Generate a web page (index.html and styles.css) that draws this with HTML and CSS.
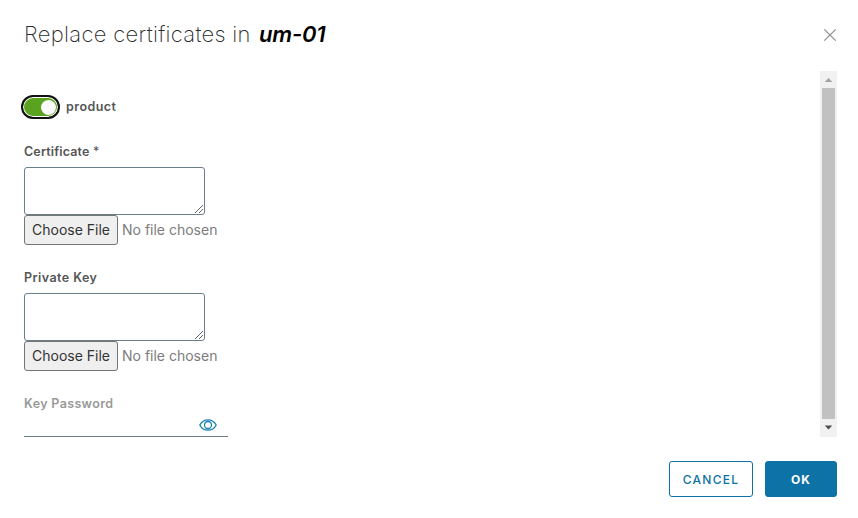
FILE: index.html
```html
<!DOCTYPE html>
<html lang="en">
<head>
<meta charset="utf-8">
<title>Replace certificates</title>
<link rel="stylesheet" href="styles.css">
</head>
<body>
<main class="dialog">
  <header class="header">
    <h1 class="title"><span class="action">Replace certificates in</span><em class="name">um-01</em></h1>
    <svg class="close" viewBox="0 0 14 14"><path d="M1.3 1.3l11.4 11.4M12.7 1.3L1.3 12.7"/></svg>
  </header>
  <div class="body">
    <form class="form">
      <div class="toggle-row"><span class="toggle"><span class="knob"></span></span><span class="label product">product</span></div>
      <section class="field">
        <div class="label cert">Certificate <span class="star">*</span></div>
        <div class="textarea"><svg class="grip" viewBox="0 0 10 10"><path d="M1 9L9 1M5 9l4-4"/></svg></div>
        <div class="file"><span class="choose"><span class="choose-text">Choose File</span></span><span class="none">No file chosen</span></div>
      </section>
      <section class="field">
        <div class="label private">Private Key</div>
        <div class="textarea"><svg class="grip" viewBox="0 0 10 10"><path d="M1 9L9 1M5 9l4-4"/></svg></div>
        <div class="file"><span class="choose"><span class="choose-text">Choose File</span></span><span class="none">No file chosen</span></div>
      </section>
      <section class="field">
        <div class="label password">Key Password</div>
        <div class="input"><svg class="eye" viewBox="0 0 18 12"><path d="M.8 6C2.500 2.800 5.400.8 9 .8S15.500 2.800 17.200 6C15.500 9.200 12.600 11.200 9 11.200S2.500 9.200.8 6z"/><circle cx="9" cy="6" r="3.500"/></svg></div>
      </section>
    </form>
    <div class="scrollbar">
      <svg class="arrow up" viewBox="0 0 17 17"><path d="M4.700 11L8.500 7l3.800 4z"/></svg>
      <div class="thumb"></div>
      <svg class="arrow down" viewBox="0 0 17 17"><path d="M4.700 6h7.600l-3.800 4z"/></svg>
    </div>
  </div>
  <footer class="footer"><div class="button cancel"><span>CANCEL</span></div><div class="button ok"><span>OK</span></div></footer>
</main>
</body>
</html>
```
FILE: styles.css
```css
* { box-sizing: border-box; }
body { margin: 0; background: #fff; font-family: Inter, "Liberation Sans", sans-serif; }
svg { display: block; fill: none; }
.dialog { height: 518px; padding: 0 21px 0 24px; display: flex; flex-direction: column; overflow: hidden; }
.header { height: 71px; display: flex; justify-content: space-between; align-items: flex-start; }
.title { margin: 19px 0 0; display: flex; gap: 8px; line-height: 30px; font-size: 22px; font-weight: 300; color: #2b2b2b; white-space: nowrap; }
.action { width: 227px; font-weight: 200; letter-spacing: .3px; }
.name { font-weight: 600; color: #000; letter-spacing: -.2px; }
.close { width: 14px; height: 14px; margin-top: 28px; stroke: #8c8c8c; stroke-width: 1.2; }
.body { height: 366px; display: flex; justify-content: space-between; }
.form { width: 204px; padding-top: 24px; }
.toggle-row { display: flex; align-items: center; gap: 6px; height: 24px; margin-left: -3px; }
.toggle { width: 39px; height: 24px; border: 2px solid #111; border-radius: 12px; background: #5aa220; box-shadow: inset 0 0 0 1px #fff; display: flex; align-items: center; justify-content: flex-end; padding-right: 2px; }
.knob { width: 15px; height: 15px; border-radius: 50%; background: #fafafa; }
.label { font-size: 12.5px; line-height: 18px; font-weight: 600; color: #555; white-space: nowrap; }
.product { letter-spacing: .45px; }
.cert { letter-spacing: .15px; }
.private { letter-spacing: .45px; }
.star { font-weight: 400; }
.field { height: 102px; margin-top: 24px; }
.textarea { width: 181px; height: 48px; margin-top: 6px; border: 1px solid #69808a; border-radius: 3px; display: flex; align-items: flex-end; justify-content: flex-end; }
.grip { width: 10px; height: 10px; stroke: #555; stroke-width: .9; }
.file { height: 30px; display: flex; align-items: center; gap: 4px; font-size: 14px; line-height: 20px; white-space: nowrap; }
.choose { width: 94px; height: 30px; padding: 4px 7px; border: 1px solid #757575; border-radius: 3px; background: #efefef; color: #333; }
.none { color: #7c7c7c; }
.password { color: #999; letter-spacing: .35px; }
.input { height: 24px; padding: 6px 11px 0 0; border-bottom: 1px solid #687d86; display: flex; justify-content: flex-end; }
.eye { width: 18px; height: 12px; stroke: #187fae; stroke-width: 1.3; }
.scrollbar { width: 17px; height: 366px; background: #f1f1f1; display: flex; flex-direction: column; align-items: center; }
.arrow { width: 17px; height: 17px; flex: none; }
.up { fill: #a3a3a3; }
.down { height: 18px; fill: #505050; }
.thumb { width: 13px; flex: 1; background: #c1c1c1; }
.footer { display: flex; justify-content: flex-end; gap: 12px; margin-top: 24px; }
.button { height: 36px; border: 1px solid #0d72a5; border-radius: 3px; display: flex; align-items: center; justify-content: center; font-size: 12px; letter-spacing: 1px; }
.cancel { width: 84px; color: #0d72a5; font-weight: 500; letter-spacing: 1.3px; }
.ok { width: 72px; background: #0d72a5; color: #fff; font-weight: 700; }
```
